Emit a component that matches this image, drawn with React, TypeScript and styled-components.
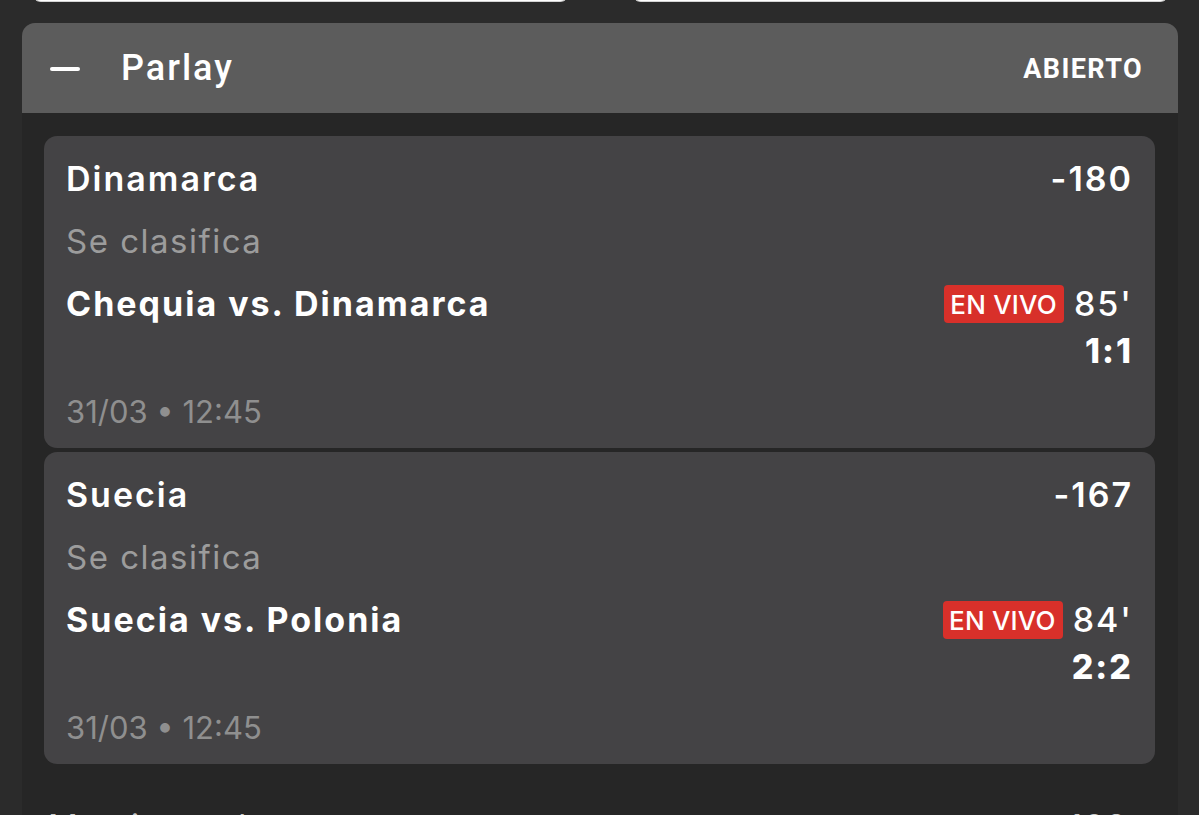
import React from "react";
import styled, { createGlobalStyle } from "styled-components";

const GlobalStyle = createGlobalStyle`
  html, body {
    margin: 0;
    padding: 0;
    background: #2b2b2b;
    overflow: hidden;
  }
  body {
    font-family: Inter, "Noto Sans", sans-serif;
    color: #fff;
  }
`;

const Page = styled.div`
  width: 1199px;
  height: 815px;
  overflow: hidden;
  background: #2b2b2b;
`;

const Column = styled.div`
  margin-top: -50px;
  padding: 0 21px 0 22px;
  display: flex;
  flex-direction: column;
`;

const TopButtons = styled.div`
  display: grid;
  grid-template-columns: 1fr 1fr;
  gap: 61px;
  padding: 0 8px 0 9px;
  margin-bottom: 21px;
`;

const WhiteButton = styled.div`
  height: 50px;
  background: #fff;
  border-radius: 10px;
  border: 1px solid #d4d4d4;
`;

const Panel = styled.section`
  display: flex;
  flex-direction: column;
`;

const PanelHeader = styled.header`
  height: 90px;
  background: #5c5c5c;
  border-radius: 13px 13px 0 0;
  display: flex;
  align-items: center;
  padding: 0 35px 0 28px;
`;

const Minus = styled.span`
  display: block;
  width: 30px;
  height: 4px;
  border-radius: 2px;
  background: #fff;
  margin: 2px 41px 0 0;
`;

const PanelTitle = styled.h2`
  flex: 1;
  margin: 0;
  font-family: Roboto, "Liberation Sans", sans-serif;
  font-weight: 500;
  font-size: 36px;
  letter-spacing: 2px;
  color: #fff;
`;

const Status = styled.span`
  font-family: Roboto, "Liberation Sans", sans-serif;
  font-weight: 700;
  font-size: 27px;
  letter-spacing: 1.4px;
  color: #fff;
  padding-top: 2px;
`;

const PanelBody = styled.div`
  background: #262626;
  padding: 23px 23px 0 22px;
  display: flex;
  flex-direction: column;
`;

const Cards = styled.div`
  display: flex;
  flex-direction: column;
  gap: 4px;
`;

const Card = styled.article`
  background: #444345;
  border-radius: 13px;
  padding: 23px 22px 16px 22px;
  display: flex;
  flex-direction: column;
`;

const Row = styled.div<{ $gap?: number }>`
  display: flex;
  justify-content: space-between;
  align-items: center;
  margin-top: ${(p) => p.$gap ?? 0}px;
  height: 40px;
`;

const Strong = styled.span<{ $weight?: number }>`
  font-size: 34px;
  line-height: 40px;
  font-weight: ${(p) => p.$weight ?? 700};
  letter-spacing: 2px;
  color: #fff;
`;

const Muted = styled.div<{ $size?: number; $gap?: number }>`
  font-size: ${(p) => p.$size ?? 33}px;
  line-height: 40px;
  font-weight: 400;
  letter-spacing: ${(p) => (p.$size ? 0 : 1.5)}px;
  color: ${(p) => (p.$size ? "#8f8f8f" : "#9c9c9c")};
  margin-top: ${(p) => p.$gap ?? 0}px;
`;

const Live = styled.div`
  display: flex;
  align-items: center;
  gap: 10px;
`;

const Badge = styled.span`
  background: #d8302a;
  border-radius: 4px;
  height: 38px;
  padding: 0 7px 0 6px;
  display: flex;
  align-items: center;
  font-size: 26px;
  font-weight: 500;
  color: #fff;
  letter-spacing: 0.2px;
`;

const Score = styled(Row)`
  justify-content: flex-end;
`;

const Footer = styled.div`
  display: flex;
  justify-content: space-between;
  padding: 0 27px 0 4px;
  margin-top: 42px;
  font-size: 33px;
  line-height: 40px;
  letter-spacing: 1.5px;
  color: #c8c8c8;
`;

type Leg = {
  pick: string;
  odds: string;
  market: string;
  match: string;
  minute: string;
  score: string;
  date: string;
};

const legs: Leg[] = [
  {
    pick: "Dinamarca",
    odds: "-180",
    market: "Se clasifica",
    match: "Chequia vs. Dinamarca",
    minute: "85'",
    score: "1:1",
    date: "31/03 • 12:45",
  },
  {
    pick: "Suecia",
    odds: "-167",
    market: "Se clasifica",
    match: "Suecia vs. Polonia",
    minute: "84'",
    score: "2:2",
    date: "31/03 • 12:45",
  },
];

const LegCard = ({ leg }: { leg: Leg }) => (
  <Card>
    <Row>
      <Strong $weight={600}>{leg.pick}</Strong>
      <Strong $weight={600}>{leg.odds}</Strong>
    </Row>
    <Muted $gap={22}>{leg.market}</Muted>
    <Row $gap={23}>
      <Strong>{leg.match}</Strong>
      <Live>
        <Badge>EN VIVO</Badge>
        <Strong $weight={500}>{leg.minute}</Strong>
      </Live>
    </Row>
    <Score $gap={7}>
      <Strong $weight={800}>{leg.score}</Strong>
    </Score>
    <Muted $size={31} $gap={21}>
      {leg.date}
    </Muted>
  </Card>
);

export default function App() {
  return (
    <Page>
      <GlobalStyle />
      <Column>
        <TopButtons>
          <WhiteButton />
          <WhiteButton />
        </TopButtons>
        <Panel>
          <PanelHeader>
            <Minus />
            <PanelTitle>Parlay</PanelTitle>
            <Status>ABIERTO</Status>
          </PanelHeader>
          <PanelBody>
            <Cards>
              {legs.map((leg) => (
                <LegCard key={leg.match} leg={leg} />
              ))}
            </Cards>
            <Footer>
              <span>Momio total</span>
              <span>+108</span>
            </Footer>
          </PanelBody>
        </Panel>
      </Column>
    </Page>
  );
}
